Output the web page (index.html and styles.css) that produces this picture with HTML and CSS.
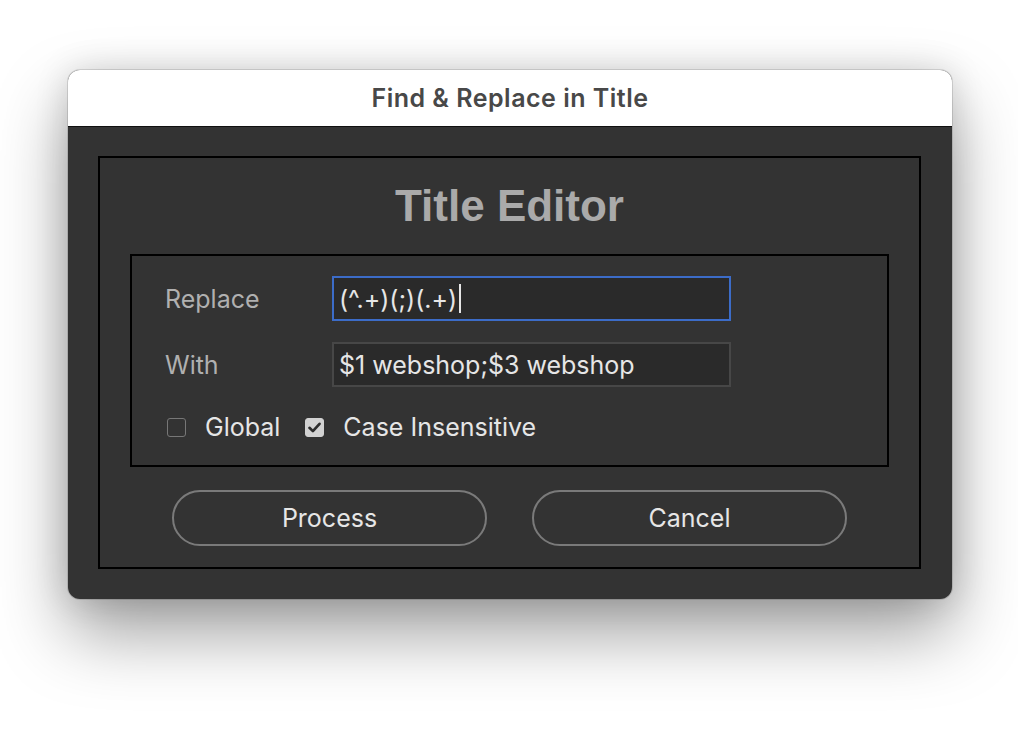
FILE: index.html
```html
<!DOCTYPE html>
<html lang="en">

<head>
    <meta charset="UTF-8">
    <title>Find &amp; Replace in Title</title>
    <link rel="stylesheet" href="styles.css">
</head>

<body>
<div class="window">
    <div class="titlebar">Find &amp; Replace in Title</div>
    <div class="content">
        <div class="panel">
            <h1 class="heading">Title Editor</h1>
            <div class="form">
                <div class="row">
                    <label class="label">Replace</label>
                    <div class="field focus">(^.+)(;)(.+)<span class="caret"></span></div>
                </div>
                <div class="row">
                    <label class="label">With</label>
                    <div class="field">$1 webshop;$3 webshop</div>
                </div>
                <div class="checks">
                    <span class="check"></span>
                    <span class="check-label">Global</span>
                    <span class="check checked">
                        <svg width="15" height="15" viewBox="0 0 14 14"><path d="M2.3 7.3 L5.5 10.4 L11.7 3.6" fill="none" stroke="#2c2c2c" stroke-width="2.5" stroke-linecap="round" stroke-linejoin="round"/></svg>
                    </span>
                    <span class="check-label">Case Insensitive</span>
                </div>
            </div>
            <div class="buttons">
                <button class="btn">Process</button>
                <button class="btn">Cancel</button>
            </div>
        </div>
    </div>
</div>
</body>

</html>
```

FILE: styles.css
```css
* {
    margin: 0;
    padding: 0;
    box-sizing: border-box;
}

html,
body {
    min-height: 734px;
}

body {
    background: #fff;
    font-family: Inter, "Noto Sans", sans-serif;
    padding: 70px 0 0 68px;
}

.window {
    width: 884px;
    height: 529px;
    border-radius: 12px;
    overflow: hidden;
    background: #333;
    box-shadow: 0 0 0 1px rgba(0, 0, 0, 0.12), 0 34px 70px rgba(0, 0, 0, 0.38), 0 0 34px rgba(0, 0, 0, 0.14);
}

.titlebar {
    height: 57px;
    line-height: 56px;
    background: #fff;
    border-bottom: 1px solid #111;
    text-align: center;
    font-size: 25px;
    font-weight: 600;
    letter-spacing: 0.5px;
    color: #484848;
}

.content {
    padding: 29px 31px 30px 30px;
}

.panel {
    border: 2px solid #000;
    height: 413px;
    padding: 0 30px;
}

.heading {
    font-family: "Liberation Sans", Arial, sans-serif;
    font-size: 44px;
    font-weight: bold;
    color: #aaa;
    text-align: center;
    height: 96px;
    line-height: 96px;
}

.form {
    border: 2px solid #000;
    height: 213px;
    padding: 20px 0 0 33px;
}

.row {
    display: flex;
    align-items: center;
    margin-bottom: 21px;
}

.label {
    width: 167px;
    font-size: 25px;
    color: #b0b0b0;
}

.field {
    width: 399px;
    height: 45px;
    background: #2a2a2a;
    border: 2px solid #474747;
    padding: 0 5px;
    display: flex;
    align-items: center;
    font-size: 25px;
    color: #e6e6e6;
}

.field.focus {
    border-color: #3c6cc8;
}

.caret {
    width: 1.5px;
    height: 29px;
    margin-left: 2px;
    background: #e6e6e6;
}

.checks {
    display: flex;
    align-items: center;
    margin-top: 27px;
    padding-left: 2px;
    height: 26px;
}

.check {
    width: 19px;
    height: 19px;
    border: 1.5px solid #777;
    border-radius: 3px;
    display: flex;
    align-items: center;
    justify-content: center;
}

.check.checked {
    background: #d2d2d2;
    border-color: #d2d2d2;
    margin-left: 2px;
}

.check-label {
    font-size: 25px;
    color: #e6e6e6;
    margin-left: 19px;
    margin-right: 23px;
}

.buttons {
    display: flex;
    justify-content: center;
    gap: 45px;
    margin-top: 23px;
}

.btn {
    width: 315px;
    height: 56px;
    border: 2px solid #7a7a7a;
    border-radius: 28px;
    background: transparent;
    font-family: Inter, "Noto Sans", sans-serif;
    font-size: 25px;
    color: #e6e6e6;
}
```
